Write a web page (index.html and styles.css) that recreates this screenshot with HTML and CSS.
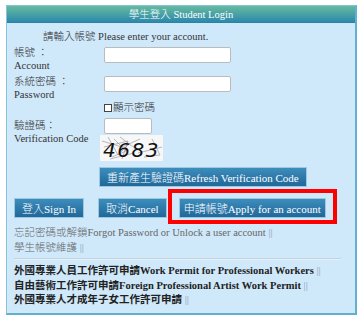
FILE: index.html
```html
<!DOCTYPE html>
<html>
<head>
<meta charset="utf-8">
<link rel="stylesheet" href="styles.css">
</head>
<body>
<div class="panel">
  <div class="head">學生登入 Student Login</div>
  <div class="content">
    <div class="intro">請輸入帳號 Please enter your account.</div>
    <div class="form">
      <div class="lbl">帳號 ：<br>Account</div>
      <div class="fld"><input class="txt wide" type="text"></div>
      <div class="lbl">系統密碼 ：<br>Password</div>
      <div class="fld"><input class="txt wide" type="password"></div>
      <div class="lbl"></div>
      <div class="fld chk"><input class="box" type="checkbox">顯示密碼</div>
      <div class="lbl lbl3">驗證碼：<br>Verification Code</div>
      <div class="fld">
        <input class="txt short" type="text">
        <svg class="captcha" width="63" height="26" viewBox="0 0 63 26">
          <rect width="63" height="26" fill="#f7f7f7"/>
          <g stroke="#9a9aa6" stroke-width="0.7" fill="none">
            <path d="M2 6 L22 12 L40 4"/>
            <path d="M8 2 L18 20 L30 8"/>
            <path d="M14 4 L26 16 L12 22"/>
            <path d="M20 2 L36 14"/>
            <path d="M4 12 L28 6 L22 24"/>
            <path d="M38 18 L62 12"/>
            <path d="M44 22 L60 20 L52 4"/>
            <path d="M10 24 L34 18"/>
          </g>
          <text x="3" y="22" class="cap-txt">4683</text>
        </svg>
        <button class="btn refresh">重新產生驗證碼Refresh Verification Code</button>
      </div>
    </div>
    <div class="actions">
      <button class="btn side">登入Sign In</button>
      <button class="btn side">取消Cancel</button>
      <div class="hl"><button class="btn apply">申請帳號Apply for an account</button></div>
    </div>
    <div class="links">
      <div>忘記密碼或解鎖Forgot Password or Unlock a user account <span class="sep">||</span></div>
      <div>學生帳號維護 <span class="sep">||</span></div>
    </div>
    <div class="rule"></div>
    <div class="apps">
      <div>外國專業人員工作許可申請Work Permit for Professional Workers <span class="sep">||</span></div>
      <div>自由藝術工作許可申請Foreign Professional Artist Work Permit <span class="sep">||</span></div>
      <div>外國專業人才成年子女工作許可申請 <span class="sep">||</span></div>
    </div>
  </div>
</div>
</body>
</html>
```

FILE: styles.css
```css
* { box-sizing: border-box; }
body {
  margin: 0;
  background: #ffffff;
  font-family: "Liberation Serif", "Noto Sans CJK TC", serif;
  font-size: 10.5px;
  font-weight: 300;
  color: #333333;
}
.panel {
  margin: 5px 0 0 6px;
  width: 351px;
  height: 310px;
  background: #cfe9fb;
  border: 1px solid #86c3dd;
  border-right: 2px solid #62b0cf;
  border-bottom: 2px solid #62b0cf;
}
.head {
  height: 17px;
  line-height: 18px;
  text-align: center;
  color: #ffffff;
  background: linear-gradient(#66baa0, #2c89ab);
  border-bottom: 1px solid #2a84a6;
}
.content {
  padding-left: 7px;
}
.intro {
  padding: 7px 0 0 29px;
  line-height: 13px;
}
.form {
  display: grid;
  grid-template-columns: 85px 1fr;
  margin-top: 3px;
  line-height: 13px;
}
.lbl { margin-bottom: 3px; }
.lbl3 { padding-top: 1px; }
.fld { display: flex; flex-direction: column; align-items: flex-start; }
.txt {
  height: 16px;
  margin: 1px 0 0 5px;
  border: 1px solid #b9bcbf;
  border-radius: 2px;
  background: #ffffff;
  padding: 0;
}
.wide { width: 127px; }
.short { width: 48px; margin-top: 0; }
.chk {
  flex-direction: row;
  align-items: center;
  padding-left: 5px;
  height: 13px;
  margin-top: -3px;
  margin-bottom: 4px;
}
.box {
  appearance: none;
  -webkit-appearance: none;
  width: 8px;
  height: 8px;
  margin: 0 1px 0 0;
  border: 1px solid #444;
  background: #fff;
}
.captcha {
  display: block;
  margin: 1px 0 0 1px;
}
.cap-txt {
  font-family: "DejaVu Sans", sans-serif;
  font-style: italic;
  font-weight: normal;
  font-size: 20px;
  letter-spacing: 1.5px;
  fill: #111111;
}
.btn {
  font-family: "Liberation Serif", "Noto Sans CJK TC", serif;
  font-size: 11px;
  font-weight: 300;
  color: #ffffff;
  height: 20px;
  padding: 0 7px;
  margin: 0;
  border: 1px solid #9cc8e0;
  background: linear-gradient(#3d8dbc, #20689a);
  white-space: nowrap;
}
.apply { padding: 0 4px; }
.refresh { margin-top: 6px; }
.actions {
  display: flex;
  align-items: flex-end;
  margin-top: 2px;
  padding-left: 0;
}
.side { margin-bottom: 6px; margin-right: 14px; }
.side + .side { margin-right: 1px; }
.hl {
  border: 4px solid #ff0000;
  padding: 5px 7px 2px 7px;
  display: flex;
}
.links {
  color: #666666;
  line-height: 15px;
  margin-top: 1px;
}
.sep { color: #8c9bb0; }
.rule {
  height: 2px;
  margin: 3px 14px 0 0;
  border-top: 1px solid #c3d3de;
  border-bottom: 1px solid #e4f1fa;
}
.apps {
  font-weight: bold;
  color: #222222;
  line-height: 14.5px;
  margin-top: 4px;
}
.apps .sep { font-weight: normal; color: #8c9bb0; }
```
